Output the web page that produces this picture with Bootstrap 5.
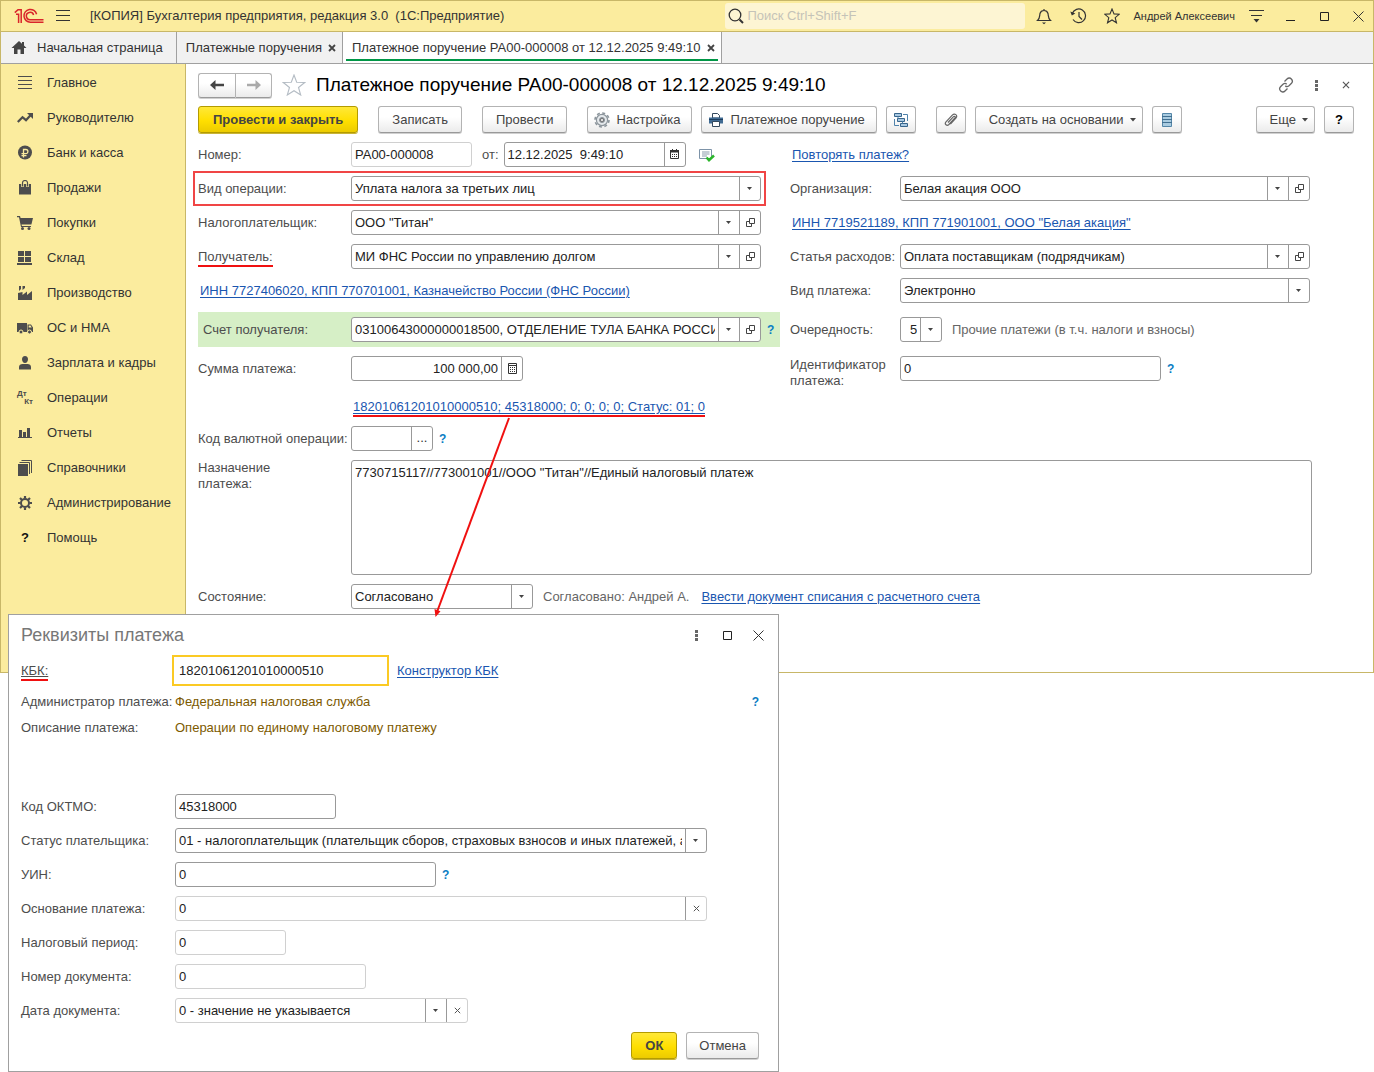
<!DOCTYPE html>
<html lang="ru">
<head>
<meta charset="utf-8">
<meta name="viewport" content="width=device-width, initial-scale=1">
<title>Платежное поручение PA00-000008</title>
<link rel="stylesheet" href="https://cdn.jsdelivr.net/npm/bootstrap@5.3.0/dist/css/bootstrap.min.css">
<style>
body{font:13px/16px "Liberation Sans",Arial,sans-serif;color:#333;background:#fff}
svg{display:block;flex:none}
button{font:inherit;color:inherit}
label,.cap{color:#4d4d4d}
.desk{min-height:1072px;overflow:hidden}
.app-win{border:1px solid #c8b768}
.title-bar{height:31px;background:#fbec9e;border-bottom:1px solid #c8b768;gap:4px;padding-left:13px}
.ico-btn{width:30px;height:30px;border:0;background:none;padding:0;display:flex;align-items:center;justify-content:center;flex:none}
.search-box{width:300px;height:26px;background:#fdf5d3;border-radius:3px;padding-left:3px;gap:3px}
.search-box input{border:0;background:none;outline:0;width:100%;padding:0}
.search-box input::placeholder{color:#c5c3b8;opacity:1}
.user-name{font-size:11px;padding:0 2px;white-space:nowrap}
.tab-bar{height:32px;background:#f1f1f1;border-bottom:1px solid #a0a0a0}
.tab-item{border-right:1px solid #a0a0a0;padding:0 6px 0 9px;gap:6px;color:#333;text-decoration:none;white-space:nowrap}
.tab-item.home-tab{gap:10px;padding:0 13px 0 10px}
.tab-item.on{background:#fff;position:relative}
.tab-item.on::after{content:"";position:absolute;left:3px;right:3px;bottom:2px;height:2px;background:#009646}
.tab-item button{border:0;background:none;padding:0}
.side-menu{width:185px;flex:none;background:#fbec9e;border-right:1px solid #c8b768;padding-top:1px}
.side-menu a{height:35px;display:flex;align-items:center;gap:14px;padding-left:16px;color:#333;text-decoration:none;white-space:nowrap}
.help-ico{width:16px;text-align:center;color:#111}
.dtkt{width:16px;font-size:8px;line-height:8px;font-weight:bold;color:#4d4d4d}
.dtkt span{display:block}
.dtkt span+span{text-align:right}
.doc-pane{padding:8px 61px 63px 12px;min-width:0}
.doc-head{height:26px;margin-right:-49px}
.fav-btn{margin:0 7px}
.doc-title{font-size:19px;line-height:24px;color:#000;margin:0;font-weight:400;white-space:nowrap}
.cmd{height:27px;border:1px solid #b3b3b3;border-bottom-color:#999;border-radius:3px;background:linear-gradient(#fff 40%,#ebebeb);padding:0 13px;display:inline-flex;align-items:center;justify-content:center;color:#444;white-space:nowrap;box-shadow:0 1px 0 #d0d0d0;flex:none}
.cmd.main-cmd{background:linear-gradient(#ffe838,#ffdf00 55%,#eccb00);border-color:#b39b00;font-weight:bold;box-shadow:0 1px 0 #c9b437;padding:0 14px}
.cmd.sq{width:30px;padding:0}
.cmd.with-ico{padding:0 11px 0 6px;gap:6px}
.cmd.drop{padding-right:6px;gap:6px}
.nav-pair .cmd{width:37px;height:25px;padding:0}
.cmd-bar{margin:8px -42px 0 0;gap:9px}
.gap-l{margin-left:11px}
.form-area{margin-top:9px}
.col-l{width:582px;flex:none}
.stack{display:flex;flex-direction:column;gap:9px}
.rw{display:flex;align-items:center;height:25px;width:563px;max-width:100%}
.rw>label:first-child,.rw>.cap{width:153px;flex:none;white-space:nowrap}
.rw .of-lbl{margin:0 5px 0 10px}
.rw .sent-ico{margin-left:13px}
.col-r .rw{width:100%}
.col-r .rw>label:first-child{width:110px}
.col-r{padding-right:2px;min-width:0}
.rw.hot{outline:2px solid #f04545;outline-offset:3px}
.band{width:582px;max-width:none;height:35px;background:#d6efc6;padding-left:5px}
.rw.band>label:first-child{width:148px}
.rw.pay-link{height:27px;padding:6px 0 0 155px}
.fld{height:25px;border:1px solid #999;border-radius:3px;background:#fff;display:flex;overflow:hidden;flex:none}
.fld.pale{border-color:#d0d0d0}
.fld input,.fld select{border:0;outline:0;background-color:transparent;font:inherit;color:#222;padding:0 3px;flex:1 1 0;min-width:0;width:0;height:23px;border-radius:0}
.fld select{appearance:none;padding-right:24px;background:url("data:image/svg+xml,%3Csvg xmlns='http://www.w3.org/2000/svg' width='5' height='3'%3E%3Cpath d='M0 0h5L2.5 3z' fill='%23444'/%3E%3C/svg%3E") right 8px top 10px no-repeat,linear-gradient(#999,#999) right 20px top/1px 100% no-repeat}
.fld select.short{padding-left:9px}
.fld button{width:21px;border:0;border-left:1px solid #999;background:none;padding:0 0 1px;display:flex;align-items:center;justify-content:center;flex:none}
.fld.wide{width:410px}
.w-num{width:121px}.w-mid{width:182px}.w-sum{width:172px}.w-code{width:82px}.w-ord{width:42px}.w-id{width:261px}
.w-okt{width:161px}.w-full{width:532px}.w-per{width:111px}.w-doc{width:191px}.w-date{width:293px}
.q{color:#0a7dc4;border:0;background:none;padding:0 6px;font-weight:bold;font-size:12px}
.lnk{color:#1a56b0;text-decoration:underline;text-underline-offset:2px;white-space:nowrap}
.lnk-in{margin-left:2px}
.red-line{box-shadow:0 2px 0 #f01010}
.hint{color:#666;white-space:nowrap;margin-left:10px}
.purpose-lbl{width:153px;flex:none}
.purpose{border:1px solid #999;border-radius:3px;height:115px;padding:3px;font:inherit;line-height:18px;color:#222;resize:none;outline:0;min-width:0}
.arrow{left:430px;top:416px;z-index:3;pointer-events:none}
.pay-dlg{left:8px;top:614px;width:771px;background:#fff;border:1px solid #a0a0a0;padding:0 19px 12px 12px;z-index:2}
.dlg-head{height:40px;margin-right:-14px;gap:1px}
.dlg-title{font-size:18px;line-height:24px;color:#777;margin:0;font-weight:400}
.pay-dlg .cmd{padding:0 12px}
.pay-dlg .cmd.main-cmd{padding:0 13px}
.pay-dlg .rw{width:100%}
.pay-dlg .rw>label:first-child,.pay-dlg .rw>.cap{width:154px}
.pay-dlg .kbk-row{height:31px}
.pay-dlg .kbk-row>.cap{width:151px}
.kbk-fld{width:217px;height:31px;border:2px solid #fbca24;padding:0 5px;color:#222;outline:0}
.info-rows{padding:3px 0 53px}
.info-rows .rw{height:26px}
.brown{color:#7d5a00}
</style>
<script src="https://cdn.jsdelivr.net/npm/bootstrap@5.3.0/dist/js/bootstrap.bundle.min.js"></script>
</head>
<body>
<svg width="0" height="0" class="position-absolute" aria-hidden="true">
  <symbol id="i-open" viewBox="0 0 9 9"><path d="M3.5.5h5v5h-5zM3.5 3.5h-3v5h5v-3" fill="none" stroke="#444"/></symbol>
  <symbol id="i-x" viewBox="0 0 7 7"><path d="M.8.8l5.400 5.400M6.200.8L.8 6.200" fill="none" stroke="#555"/></symbol>
  <symbol id="i-dots" viewBox="0 0 3 11"><path d="M0 0h3v3H0zM0 4h3v3H0zM0 8h3v3H0z" fill="#666"/></symbol>
  <symbol id="i-max" viewBox="0 0 9 9"><path d="M.5.5h8v8h-8z" fill="none" stroke="#222"/></symbol>
  <symbol id="i-close" viewBox="0 0 11 11"><path d="M.5.5l10 10M10.500.5l-10 10" fill="none" stroke="#333"/></symbol>
</svg>
<div class="desk position-relative">
<div class="app-win">
  <header class="title-bar d-flex align-items-center">
    <svg width="30" height="16" viewBox="0 0 30 16" fill="none" stroke="#d9252b" stroke-width="1.500"><path d="M.8 4.600L4 1.800h3.200V15M2 6.300h2.600V15M22.600 6.200A6.400 6.400 0 1 0 16.500 14.200H29.500M19.600 7A3.700 3.700 0 1 0 16.500 11.700H29.500"/></svg>
    <button class="ico-btn" aria-label="Меню"><svg width="14" height="12" viewBox="0 0 14 12"><path d="M0 .5h14M0 5.500h14M0 10.500h14" stroke="#333"/></svg></button>
    <span class="ms-2 text-nowrap">[КОПИЯ] Бухгалтерия предприятия, редакция 3.0&nbsp; (1С:Предприятие)</span>
    <div class="search-box d-flex align-items-center ms-auto">
      <svg width="16" height="16" viewBox="0 0 16 16" fill="none" stroke="#333"><circle cx="7" cy="7" r="5.800" stroke-width="1.300"/><path d="M11.500 11.500l3.500 3.500" stroke-width="2"/></svg>
      <input type="search" placeholder="Поиск Ctrl+Shift+F" aria-label="Поиск">
    </div>
    <button class="ico-btn" aria-label="Уведомления"><svg width="16" height="17" viewBox="0 0 16 17" fill="none" stroke="#333" stroke-width="1.200"><path d="M8 1v1.500M1.500 12.500C4 10.500 3.500 8 4 5.500 4.500 3.500 6 2.500 8 2.500s3.500 1 4 3c.500 2.500 0 5 2.500 7z"/><path d="M6 14.500h4l-2 1.800z" fill="#333" stroke="none"/></svg></button>
    <button class="ico-btn" aria-label="История"><svg width="17" height="16" viewBox="0 0 17 16" fill="none" stroke="#333" stroke-width="1.200"><path d="M2.300 5.500A6.800 6.800 0 1 1 3 11.500M9 4v4.500l3 3"/><path d="M.3 3.500l1.500 4 3.500-2z" fill="#333" stroke="none"/></svg></button>
    <button class="ico-btn" aria-label="Избранное"><svg width="16" height="16" viewBox="0 0 16 16" fill="none" stroke="#333" stroke-width="1.100"><path d="M8 1l2 4.900 5.200.400-4 3.400 1.300 5.100L8 12l-4.500 2.800 1.300-5.100-4-3.400L6 5.900z"/></svg></button>
    <span class="user-name">Андрей Алексеевич</span>
    <button class="ico-btn" aria-label="Настройки"><svg width="15" height="13" viewBox="0 0 15 13"><path d="M0 .5h15M2 5.500h11" stroke="#333"/><path d="M4.500 9h6l-3 3.500z" fill="#333"/></svg></button>
    <button class="ico-btn" aria-label="Свернуть"><svg width="9" height="9" viewBox="0 0 9 9"><path d="M0 8.500h9" stroke="#222"/></svg></button>
    <button class="ico-btn" aria-label="Развернуть"><svg width="9" height="9"><use href="#i-max"/></svg></button>
    <button class="ico-btn" aria-label="Закрыть"><svg width="11" height="11"><use href="#i-close"/></svg></button>
  </header>
  <nav class="tab-bar d-flex">
    <a href="#" class="tab-item home-tab d-flex align-items-center"><svg width="16" height="14" viewBox="0 0 16 14"><path d="M8 0L.5 7H3v6h3.500V8.500h3V13H13V7h2.500L13 4.600V1h-2v1.800z" fill="#444"/></svg>Начальная страница</a>
    <div class="tab-item d-flex align-items-center"><a href="#" class="text-reset text-decoration-none">Платежные поручения</a><button aria-label="Закрыть вкладку"><svg width="8" height="8" viewBox="0 0 8 8"><path d="M1 1l6 6M7 1L1 7" stroke="#444" stroke-width="1.800"/></svg></button></div>
    <div class="tab-item on d-flex align-items-center"><a href="#" class="text-reset text-decoration-none">Платежное поручение PA00-000008 от 12.12.2025 9:49:10</a><button aria-label="Закрыть вкладку"><svg width="8" height="8" viewBox="0 0 8 8"><path d="M1 1l6 6M7 1L1 7" stroke="#444" stroke-width="1.800"/></svg></button></div>
  </nav>
  <div class="d-flex">
    <nav class="side-menu">
      <a href="#"><svg width="16" height="16" viewBox="0 0 16 16"><path d="M1 1.500h14M1 5.500h14M1 9.500h14M1 13.500h14" stroke="#4d4d4d"/></svg>Главное</a>
      <a href="#"><svg width="16" height="16" viewBox="0 0 16 16"><path d="M.8 12L5.500 7.200l3.500 3 4.500-5" fill="none" stroke="#4d4d4d" stroke-width="2.200"/><path d="M10 3h6v6z" fill="#4d4d4d"/></svg>Руководителю</a>
      <a href="#"><svg width="16" height="16" viewBox="0 0 16 16"><circle cx="8" cy="7.500" r="7" fill="#4d4d4d"/><path d="M6.500 12.500V4.500h2.300a2 2 0 0 1 0 4.200H4.500M4.500 10.700h5" fill="none" stroke="#fbec9e" stroke-width="1.300"/></svg>Банк и касса</a>
      <a href="#"><svg width="16" height="16" viewBox="0 0 16 16"><path d="M2 4h12v10.500H2z" fill="#4d4d4d"/><path d="M5.500 7V2.500a2.500 2 0 0 1 5 0V7" fill="none" stroke="#fbec9e" stroke-width="2.600"/><path d="M5.500 6.500V2.700a2.500 2.200 0 0 1 5 0V6.500" fill="none" stroke="#4d4d4d" stroke-width="1.200"/></svg>Продажи</a>
      <a href="#"><svg width="16" height="16" viewBox="0 0 16 16"><path d="M0 1h3l.6 2H16l-1.600 6.500H4.500l.4 1.500H14v1H4L2 2.200H0z" fill="#4d4d4d"/><circle cx="5.500" cy="13.600" r="1.500" fill="#4d4d4d"/><circle cx="12" cy="13.600" r="1.500" fill="#4d4d4d"/></svg>Покупки</a>
      <a href="#"><svg width="16" height="16" viewBox="0 0 16 16"><path d="M1 1h6v5H1zM8 1h6v5H8zM1 7h6v5H1zM8 7h6v5H8zM0 13h15v2H0z" fill="#4d4d4d"/></svg>Склад</a>
      <a href="#"><svg width="16" height="16" viewBox="0 0 16 16"><path d="M1 15V8l4.500-1v3L10 6.500V10l5-4v9zM2 1h2v3L2 6zM5.500 1H8v2L5.500 5z" fill="#4d4d4d"/></svg>Производство</a>
      <a href="#"><svg width="16" height="16" viewBox="0 0 16 16"><path d="M0 3h10v9H0zM10.500 4.500H14l2 3v4.500h-5.500z" fill="#4d4d4d"/><path d="M11.700 5.500h1.800l1.200 2h-3z" fill="#fbec9e"/><g fill="#4d4d4d" stroke="#fbec9e"><circle cx="4" cy="12" r="2"/><circle cx="12.500" cy="12" r="2"/></g></svg>ОС и НМА</a>
      <a href="#"><svg width="16" height="16" viewBox="0 0 16 16"><path d="M8 1c2 0 3 1.400 3 3.200S10 8 8 8 5 6 5 4.200 6 1 8 1zM2 14.500V12c0-2 1.500-3 3.500-3h5c2 0 3.500 1 3.500 3v2.500z" fill="#4d4d4d"/></svg>Зарплата и кадры</a>
      <a href="#"><span class="dtkt"><span>Дт</span><span>Кт</span></span>Операции</a>
      <a href="#"><svg width="16" height="16" viewBox="0 0 16 16"><path d="M2 5h3v8H2zM6 7h3v6H6zM10 3h3v10h-3zM1 12h14v1H1z" fill="#4d4d4d"/></svg>Отчеты</a>
      <a href="#"><svg width="16" height="16" viewBox="0 0 16 16"><path d="M1 4h10v12H1z" fill="#4d4d4d"/><path d="M2.500 2.500h10V14M4.500.5h10V13" fill="none" stroke="#4d4d4d"/></svg>Справочники</a>
      <a href="#"><svg width="16" height="16" viewBox="0 0 16 16" fill="none" stroke="#4d4d4d"><circle cx="8" cy="8" r="4" stroke-width="2"/><path d="M8 1v2.500M8 12.500V15M1 8h2.500M12.500 8H15M3 3l2 2M11 11l2 2M13 3l-2 2M5 11l-2 2" stroke-width="2.200"/></svg>Администрирование</a>
      <a href="#"><b class="help-ico">?</b>Помощь</a>
    </nav>
    <main class="doc-pane flex-grow-1">
      <div class="doc-head d-flex align-items-center">
        <div class="nav-pair d-flex">
          <button class="cmd rounded-end-0 border-end-0" aria-label="Назад"><svg width="14" height="10" viewBox="0 0 14 10"><path d="M0 5l5.500-5v3.700H14v2.600H5.500V10z" fill="#444"/></svg></button><button class="cmd rounded-start-0" aria-label="Вперед"><svg width="14" height="10" viewBox="0 0 14 10"><path d="M14 5L8.500 0v3.700H0v2.600h8.500V10z" fill="#aaa"/></svg></button>
        </div>
        <button class="ico-btn fav-btn" aria-label="В избранное"><svg width="24" height="22" viewBox="0 0 24 22" fill="none" stroke="#b4bcc4" stroke-width="1.100"><path d="M12 1l2.700 7.200 8 .3-6.200 5 2.200 7.500-6.700-4.300L5.300 21l2.200-7.500-6.200-5 8-.3z"/></svg></button>
        <h1 class="doc-title">Платежное поручение PA00-000008 от 12.12.2025 9:49:10</h1>
        <button class="ico-btn ms-auto" aria-label="Ссылка"><svg width="16" height="16" viewBox="0 0 16 16" fill="none" stroke="#666" stroke-width="1.300"><path d="M6.500 4.500L9 2c3-3 7 1.500 4.500 4.200L11 8.700C9.500 10 8 9.500 7.300 8.700M9.500 11.500L7 14c-3 3-7-1.500-4.500-4.200L5 7.300C6.500 6 8 6.500 8.700 7.300"/></svg></button>
        <button class="ico-btn" aria-label="Ещё"><svg width="3" height="11"><use href="#i-dots"/></svg></button>
        <button class="ico-btn" aria-label="Закрыть"><svg width="8" height="8"><use href="#i-x"/></svg></button>
      </div>
      <div class="cmd-bar d-flex">
        <button class="cmd main-cmd">Провести и закрыть</button>
        <button class="cmd gap-l">Записать</button>
        <button class="cmd gap-l">Провести</button>
        <button class="cmd with-ico gap-l"><svg width="16" height="16" viewBox="0 0 16 16" fill="none" stroke="#8c959c"><circle cx="8" cy="8" r="7" stroke-width="1.600" stroke-dasharray="3 2.500"/><circle cx="8" cy="8" r="5.600" fill="#e4e8eb" stroke-width="1.200"/><circle cx="8" cy="8" r="2.500" fill="#777"/><circle cx="8" cy="8" r="1" fill="#fff" stroke="none"/></svg>Настройка</button>
        <button class="cmd with-ico"><svg width="16" height="16" viewBox="0 0 16 16"><path d="M4.500 1.500h5l2 2V6h-7z" fill="#fff" stroke="#34495e"/><path d="M1 5.500h14v6H1z" fill="#3f6a92"/><path d="M1 7.500h14" stroke="#1d3c5c"/><path d="M4.500 9.500h7v5h-7z" fill="#fff" stroke="#34495e"/></svg>Платежное поручение</button>
        <button class="cmd sq" aria-label="Структура подчиненности"><svg width="16" height="16" viewBox="0 0 16 16"><g fill="#a9c9e2" stroke="#37658c"><path d="M1.500 1.500h7v3h-7zM4.500 6.500h7v3h-7zM7.500 11.500h7v3h-7z"/></g><path d="M10 2.500h4.500V9M1.500 7v6.500H6M5 4.500v2M9.500 9.500v2" fill="none" stroke="#4f82ab"/></svg></button>
        <button class="cmd sq gap-l" aria-label="Файлы"><svg width="14" height="15" viewBox="0 0 14 15" fill="none" stroke="#666" stroke-width="1.200"><path d="M4 10.500l5.500-5.800c1-1 2.300.2 1.400 1.300l-6 6.500c-2 2-4.800-.4-2.900-2.600l6.300-6.800c2.500-2.500 5.800.3 3.600 3l-5.500 6"/></svg></button>
        <button class="cmd drop">Создать на основании<svg width="6" height="4"><path d="M0 0h6L3 3.500z" fill="#444"/></svg></button>
        <button class="cmd sq" aria-label="Список"><svg width="10" height="16" viewBox="0 0 10 16"><path d="M.5 1.500h9v13h-9z" fill="#a9cbe0" stroke="#5486a8"/><path d="M0 4.500h10M0 7.500h10M0 10.500h10" stroke="#416f90"/></svg></button>
        <button class="cmd drop ms-auto">Еще<svg width="6" height="4"><path d="M0 0h6L3 3.500z" fill="#444"/></svg></button>
        <button class="cmd sq fw-bold text-black">?</button>
      </div>
      <form class="form-area stack">
        <div class="d-flex" style="gap:10px">
          <div class="col-l stack">
            <div class="rw"><label for="num">Номер:</label><div class="fld pale w-num"><input id="num" value="PA00-000008" readonly></div>
              <label for="dt" class="of-lbl">от:</label><div class="fld w-mid"><input id="dt" value="12.12.2025&nbsp; 9:49:10"><button type="button" aria-label="Календарь"><svg width="9" height="10" viewBox="0 0 9 10"><path d="M.5 1.500h8v8h-8z" fill="none" stroke="#333"/><path d="M0 1h9v2.500H0zM2 0h1v1H2zM6 0h1v1H6z" fill="#333"/><path d="M2 5.500h5M2 7.500h5" stroke="#333" stroke-dasharray="1 1"/></svg></button></div>
              <svg class="sent-ico" width="16" height="14" viewBox="0 0 16 14"><path d="M.5 1.500h12v9H.5z" fill="#fff" stroke="#7d93a8"/><path d="M3 4h7.500M3 6h7.500M3 8h5" stroke="#8b9bab"/><path d="M7.500 9.500l2.500 2.700 5-4.700" fill="none" stroke="#2bb52b" stroke-width="2.500"/></svg></div>
            <div class="rw hot"><label for="op">Вид операции:</label><div class="fld wide"><select id="op"><option>Уплата налога за третьих лиц</option></select></div></div>
            <div class="rw"><label for="np">Налогоплательщик:</label><div class="fld wide"><select id="np"><option>ООО "Титан"</option></select><button type="button" aria-label="Открыть"><svg width="9" height="9"><use href="#i-open"/></svg></button></div></div>
            <div class="rw"><span class="cap"><label for="rc" class="red-line">Получатель:</label></span><div class="fld wide"><select id="rc"><option>МИ ФНС России по управлению долгом</option></select><button type="button" aria-label="Открыть"><svg width="9" height="9"><use href="#i-open"/></svg></button></div></div>
            <div class="rw"><a href="#" class="lnk lnk-in">ИНН 7727406020, КПП 770701001, Казначейство России (ФНС России)</a></div>
            <div class="rw band"><label for="ac">Счет получателя:</label><div class="fld wide"><select id="ac"><option>03100643000000018500, ОТДЕЛЕНИЕ ТУЛА БАНКА РОССИИ</option></select><button type="button" aria-label="Открыть"><svg width="9" height="9"><use href="#i-open"/></svg></button></div><button type="button" class="q">?</button></div>
            <div class="rw"><label for="sm">Сумма платежа:</label><div class="fld w-sum"><input id="sm" class="text-end" value="100 000,00"><button type="button" aria-label="Калькулятор"><svg width="9" height="11" viewBox="0 0 9 11"><path d="M.5.5h8v10h-8zM0 2.500h9" fill="none" stroke="#333"/><path d="M2 4.500h5M2 6.500h5M2 8.500h5" stroke="#333" stroke-dasharray="1 1"/></svg></button></div></div>
          </div>
          <div class="col-r stack flex-grow-1">
            <div class="rw"><a href="#" class="lnk lnk-in">Повторять платеж?</a></div>
            <div class="rw"><label for="org">Организация:</label><div class="fld flex-grow-1"><select id="org"><option>Белая акация ООО</option></select><button type="button" aria-label="Открыть"><svg width="9" height="9"><use href="#i-open"/></svg></button></div></div>
            <div class="rw"><a href="#" class="lnk lnk-in">ИНН 7719521189, КПП 771901001, ООО "Белая акация"</a></div>
            <div class="rw"><label for="exp">Статья расходов:</label><div class="fld flex-grow-1"><select id="exp"><option>Оплата поставщикам (подрядчикам)</option></select><button type="button" aria-label="Открыть"><svg width="9" height="9"><use href="#i-open"/></svg></button></div></div>
            <div class="rw"><label for="kind">Вид платежа:</label><div class="fld flex-grow-1"><select id="kind"><option>Электронно</option></select></div></div>
            <div class="rw" style="height:35px"><label for="ord">Очередность:</label><div class="fld w-ord"><select id="ord" class="short"><option>5</option></select></div><span class="hint">Прочие платежи (в т.ч. налоги и взносы)</span></div>
            <div class="rw"><label for="idp" class="pt-2">Идентификатор<br>платежа:</label><div class="fld w-id"><input id="idp" value="0"></div><button type="button" class="q">?</button></div>
          </div>
        </div>
        <div class="rw pay-link"><a href="#" class="lnk red-line">18201061201010000510; 45318000; 0; 0; 0; 0; Статус: 01; 0</a></div>
        <div class="rw"><label for="cc">Код валютной операции:</label><div class="fld w-code"><input id="cc"><button type="button" aria-label="Выбрать">...</button></div><button type="button" class="q">?</button></div>
        <div class="d-flex"><label for="pp" class="purpose-lbl">Назначение<br>платежа:</label><textarea id="pp" class="purpose flex-grow-1">7730715117//773001001//ООО "Титан"//Единый налоговый платеж</textarea></div>
        <div class="rw"><label for="st">Состояние:</label><div class="fld w-mid"><select id="st"><option>Согласовано</option></select></div><span class="hint me-2 pe-1">Согласовано: Андрей А.</span><a href="#" class="lnk">Ввести документ списания с расчетного счета</a></div>
      </form>
    </main>
  </div>
</div>

<section class="pay-dlg position-absolute" role="dialog" aria-labelledby="dlg-t">
  <div class="dlg-head d-flex align-items-center">
    <h2 class="dlg-title me-auto" id="dlg-t">Реквизиты платежа</h2>
    <button class="ico-btn" aria-label="Ещё"><svg width="3" height="11"><use href="#i-dots"/></svg></button>
    <button class="ico-btn" aria-label="Развернуть"><svg width="9" height="9"><use href="#i-max"/></svg></button>
    <button class="ico-btn" aria-label="Закрыть"><svg width="11" height="11"><use href="#i-close"/></svg></button>
  </div>
  <form>
    <div class="rw kbk-row"><span class="cap"><label for="kbk" class="red-line text-decoration-underline">КБК:</label></span><input id="kbk" class="kbk-fld" value="18201061201010000510"><a href="#" class="lnk ms-2">Конструктор КБК</a></div>
    <div class="info-rows">
      <div class="rw"><span class="cap">Администратор платежа:</span><span class="brown">Федеральная налоговая служба</span><button type="button" class="q ms-auto pe-0">?</button></div>
      <div class="rw"><span class="cap">Описание платежа:</span><span class="brown">Операции по единому налоговому платежу</span></div>
    </div>
    <div class="stack">
      <div class="rw"><label for="okt">Код ОКТМО:</label><div class="fld w-okt"><input id="okt" value="45318000"></div></div>
      <div class="rw"><label for="sts">Статус плательщика:</label><div class="fld w-full"><select id="sts"><option>01 - налогоплательщик (плательщик сборов, страховых взносов и иных платежей, администрируемых налоговыми органами)</option></select></div></div>
      <div class="rw"><label for="uin">УИН:</label><div class="fld w-id"><input id="uin" value="0"></div><button type="button" class="q">?</button></div>
      <div class="rw"><label for="osn">Основание платежа:</label><div class="fld pale w-full"><input id="osn" value="0"><button type="button" aria-label="Очистить"><svg width="7" height="7"><use href="#i-x"/></svg></button></div></div>
      <div class="rw"><label for="per">Налоговый период:</label><div class="fld pale w-per"><input id="per" value="0"></div></div>
      <div class="rw"><label for="dn">Номер документа:</label><div class="fld pale w-doc"><input id="dn" value="0"></div></div>
      <div class="rw"><label for="dd">Дата документа:</label><div class="fld pale w-date"><select id="dd"><option>0 - значение не указывается</option></select><button type="button" aria-label="Очистить"><svg width="7" height="7"><use href="#i-x"/></svg></button></div></div>
      <div class="d-flex justify-content-end" style="gap:9px"><button type="button" class="cmd main-cmd">ОК</button><button type="button" class="cmd">Отмена</button></div>
    </div>
  </form>
</section>
<svg class="arrow position-absolute" width="84" height="204" viewBox="0 0 84 204"><path d="M79 2L7 196" stroke="#f01010" stroke-width="2"/><path d="M5.500 201L4.500 193l6 2.300z" fill="#f01010"/></svg>
</div>
</body>
</html>
